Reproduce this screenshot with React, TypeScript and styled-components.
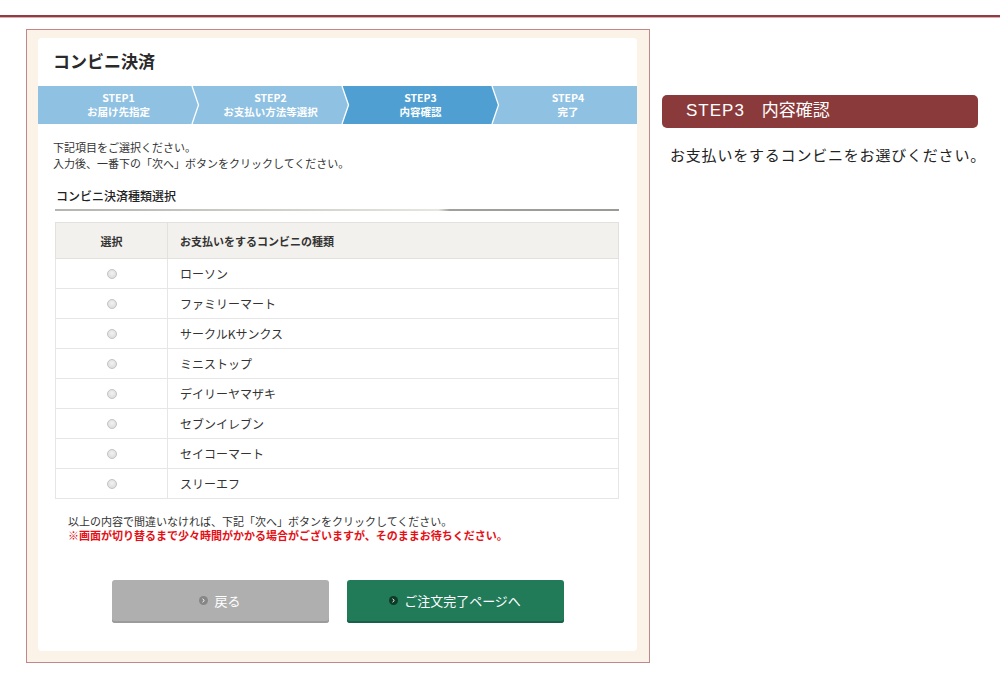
import React from 'react';
import styled, { createGlobalStyle } from 'styled-components';

const GlobalStyle = createGlobalStyle`
    html, body {
        margin: 0;
        padding: 0;
        background: #ffffff;
    }
    body {
        font-family: "Noto Sans CJK JP", "Noto Sans", "Liberation Sans", sans-serif;
        color: #333;
    }
`

const TopLine = styled.div`
    margin-top: 15px;
    height: 2px;
    background: #8e3e42;
    box-shadow: 0 1px 0 #d8aeb0;
`

const Main = styled.div`
    display: flex;
    align-items: flex-start;
    padding-left: 26px;
    margin-top: 12px;
`

const Frame = styled.div`
    box-sizing: border-box;
    width: 624px;
    height: 634px;
    border: 1px solid #c2878a;
    background: #fcf3e8;
    padding: 8px 12px 11px 11px;
`

const Panel = styled.div`
    height: 613px;
    background: #ffffff;
    border-radius: 4px;
    display: flex;
    flex-direction: column;
`

const Title = styled.h1`
    margin: 0;
    height: 48px;
    box-sizing: border-box;
    padding: 11px 0 0 15px;
    font-size: 17px;
    line-height: 24px;
    font-weight: bold;
    color: #2a2a2a;
`

const StepBar = styled.div`
    display: flex;
    height: 38px;
    background: #8fc1e3;
`

const Step = styled.div<{ $w?: number; $active?: boolean }>`
    position: relative;
    box-sizing: border-box;
    width: ${p => (p.$w ? `${p.$w}px` : 'auto')};
    flex: ${p => (p.$w ? '0 0 auto' : '1 1 0')};
    padding: 5px 0 0 7px;
    text-align: center;
    color: #ffffff;
    font-size: 10.5px;
    line-height: 14px;
    font-weight: bold;

    &::before {
        content: '';
        display: ${p => (p.$active ? 'block' : 'none')};
        position: absolute;
        top: 0;
        bottom: 0;
        left: 0;
        right: -7px;
        background: #4f9fd2;
        clip-path: polygon(0 0, calc(100% - 7px) 0, 100% 50%, calc(100% - 7px) 100%, 0 100%, 7px 50%);
    }
`

const StepText = styled.div`
    position: relative;
`

const Chevron = styled.svg`
    position: absolute;
    top: 0;
    right: -8px;
    width: 9px;
    height: 38px;
    z-index: 1;
`

const Intro = styled.p`
    margin: 15px 0 0 15px;
    font-size: 11px;
    line-height: 16px;
    color: #333;
`

const Content = styled.div`
    padding: 0 18px 0 17px;
`

const SectionHead = styled.h2`
    margin: 16px 0 0;
    padding: 0 0 4px 1px;
    font-size: 12px;
    line-height: 18px;
    font-weight: 500;
    color: #222;
`

const Divider = styled.div`
    height: 2px;
    background: linear-gradient(to right, #b4b4b0 0%, #d8d8d2 50%, #e6e6e0 68%, #a0a09c 70%, #9a9a96 100%);
`

const Table = styled.table`
    margin-top: 11px;
    width: 100%;
    border-collapse: collapse;
    font-size: 12px;
    color: #333;
`

const HeadCell = styled.th<{ $center?: boolean }>`
    height: 36px;
    box-sizing: border-box;
    padding: 0 0 0 ${p => (p.$center ? '0' : '12px')};
    background: #f3f1ed;
    border: 1px solid #e3e1dd;
    text-align: ${p => (p.$center ? 'center' : 'left')};
    width: ${p => (p.$center ? '112px' : 'auto')};
    font-size: 11px;
    font-weight: bold;
    color: #333;
`

const Cell = styled.td<{ $center?: boolean }>`
    height: 30px;
    box-sizing: border-box;
    padding: 0 0 1px ${p => (p.$center ? '0' : '12px')};
    border: 1px solid #e6e6e6;
    text-align: ${p => (p.$center ? 'center' : 'left')};
    width: ${p => (p.$center ? '112px' : 'auto')};
`

const Radio = styled.input`
    appearance: none;
    margin: 3px 0 0;
    width: 10px;
    height: 10px;
    border-radius: 50%;
    border: 1px solid #c4c4c4;
    background: radial-gradient(circle at 50% 40%, #f2f2f2 0%, #d6d6d6 100%);
    box-sizing: border-box;
`

const Notice = styled.div`
    margin: 15px 0 0 30px;
    font-size: 11px;
    line-height: 14px;
    color: #333;
`

const Warn = styled.div`
    color: #e50f16;
    font-weight: bold;
`

const Buttons = styled.div`
    display: flex;
    justify-content: center;
    gap: 18px;
    margin-top: 38px;
`

const Button = styled.button<{ $tone: 'gray' | 'green' }>`
    display: flex;
    align-items: center;
    justify-content: center;
    gap: 6px;
    width: 217px;
    height: 43px;
    border: none;
    border-radius: 3px;
    background: ${p => (p.$tone === 'gray' ? '#b0afaf' : '#217a58')};
    box-shadow: inset 0 -2px 0 ${p => (p.$tone === 'gray' ? '#9c9b9b' : '#18604a')};
    color: #ffffff;
    font-family: inherit;
    font-size: 13px;
    padding: 0 0 2px;
`

const BtnIcon = styled.span<{ $tone: 'gray' | 'green' }>`
    display: inline-flex;
    align-items: center;
    justify-content: center;
    width: 9px;
    height: 9px;
    border-radius: 50%;
    background: ${p => (p.$tone === 'gray' ? '#878686' : '#0e3b27')};
`

const Side = styled.div`
    margin-left: 12px;
    padding-top: 66px;
    width: 316px;
`

const SideHead = styled.div`
    height: 33px;
    box-sizing: border-box;
    padding: 4px 0 0 24px;
    background: #8b3a3b;
    border-radius: 5px;
    color: #ffffff;
    font-size: 17px;
    line-height: 24px;
    font-family: "Liberation Sans", "Noto Sans CJK JP", sans-serif;
`

const SideStep = styled.span`
    letter-spacing: 1px;
`

const SideText = styled.p`
    margin: 16px 0 0 8px;
    font-size: 15px;
    letter-spacing: 0.8px;
    line-height: 22px;
    color: #222;
    white-space: nowrap;
`

const steps = [
    { no: 'STEP1', label: 'お届け先指定', w: 154 },
    { no: 'STEP2', label: 'お支払い方法等選択', w: 150 },
    { no: 'STEP3', label: '内容確認', w: 150, active: true },
    { no: 'STEP4', label: '完了' },
]

const stores = [
    'ローソン',
    'ファミリーマート',
    'サークルKサンクス',
    'ミニストップ',
    'デイリーヤマザキ',
    'セブンイレブン',
    'セイコーマート',
    'スリーエフ',
]

const Arrow = () => (
    <svg width="5" height="5" viewBox="0 0 5 5">
        <polyline points="1.5,0.8 3.3,2.5 1.5,4.2" fill="none" stroke="#fff" strokeWidth="1" />
    </svg>
)

export default function App() {
    return (
        <>
            <GlobalStyle />
            <TopLine />
            <Main>
                <Frame>
                    <Panel>
                        <Title>コンビニ決済</Title>
                        <StepBar>
                            {steps.map((s, i) => (
                                <Step key={s.no} $w={s.w} $active={s.active}>
                                    <StepText>
                                        <div>{s.no}</div>
                                        <div>{s.label}</div>
                                    </StepText>
                                    {i < steps.length - 1 && (
                                        <Chevron viewBox="0 0 9 38">
                                            <polyline points="1,0 7.5,19 1,38" fill="none" stroke="#ffffff" strokeWidth="1.3" />
                                        </Chevron>
                                    )}
                                </Step>
                            ))}
                        </StepBar>
                        <Intro>
                            下記項目をご選択ください。<br />
                            入力後、一番下の「次へ」ボタンをクリックしてください。
                        </Intro>
                        <Content>
                            <SectionHead>コンビニ決済種類選択</SectionHead>
                            <Divider />
                            <Table>
                                <thead>
                                    <tr>
                                        <HeadCell $center>選択</HeadCell>
                                        <HeadCell>お支払いをするコンビニの種類</HeadCell>
                                    </tr>
                                </thead>
                                <tbody>
                                    {stores.map(name => (
                                        <tr key={name}>
                                            <Cell $center>
                                                <Radio type="radio" name="cvs" />
                                            </Cell>
                                            <Cell>{name}</Cell>
                                        </tr>
                                    ))}
                                </tbody>
                            </Table>
                        </Content>
                        <Notice>
                            以上の内容で間違いなければ、下記「次へ」ボタンをクリックしてください。
                            <Warn>※画面が切り替るまで少々時間がかかる場合がございますが、そのままお待ちください。</Warn>
                        </Notice>
                        <Buttons>
                            <Button $tone="gray">
                                <BtnIcon $tone="gray"><Arrow /></BtnIcon>
                                戻る
                            </Button>
                            <Button $tone="green">
                                <BtnIcon $tone="green"><Arrow /></BtnIcon>
                                ご注文完了ページへ
                            </Button>
                        </Buttons>
                    </Panel>
                </Frame>
                <Side>
                    <SideHead><SideStep>STEP3</SideStep>　内容確認</SideHead>
                    <SideText>お支払いをするコンビニをお選びください。</SideText>
                </Side>
            </Main>
        </>
    );
}
